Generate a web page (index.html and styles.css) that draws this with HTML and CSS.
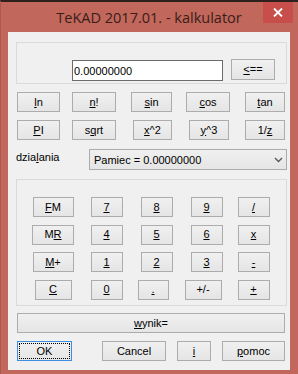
FILE: index.html
```html
<!DOCTYPE html>
<html>
<head>
<meta charset="utf-8">
<link rel="stylesheet" href="styles.css">
</head>
<body>
<div class="win">
  <div class="titlebar">
    <div class="title">TeKAD 2017.01. - kalkulator</div>
    <div class="close">
      <svg width="10" height="9" viewBox="0 0 10 9"><path d="M1 0.5 L9 8.5 M9 0.5 L1 8.5" stroke="#fff" stroke-width="1.8" fill="none"/></svg>
    </div>
  </div>
  <div class="client">
    <div class="group g1">
      <input class="edit" type="text" value="0.00000000">
      <button class="btn back"><span><u>&lt;</u>==</span></button>
    </div>

    <div class="fn">
      <button class="btn w43"><span><u>l</u>n</span></button>
      <button class="btn w44 m12"><span><u>n</u>!</span></button>
      <button class="btn w41 m15"><span><u>s</u>in</span></button>
      <button class="btn w44 m14"><span><u>c</u>os</span></button>
      <button class="btn w40 m15"><span><u>t</u>an</span></button>
    </div>
    <div class="fn">
      <button class="btn w43"><span><u>P</u>I</span></button>
      <button class="btn w44 m12"><span>s<u>q</u>rt</span></button>
      <button class="btn w39 m17"><span><u>x</u>^2</span></button>
      <button class="btn w40 m17"><span><u>y</u>^3</span></button>
      <button class="btn w40 m16"><span>1/<u>z</u></span></button>
    </div>

    <div class="ops">
      <div class="ops-label">dzia<u>l</u>ania</div>
      <div class="combo">
        <span>Pamiec = 0.00000000</span>
        <svg width="9" height="6" viewBox="0 0 9 6"><path d="M1 1 L4.5 4.5 L8 1" stroke="#5a5a5a" stroke-width="1.4" fill="none"/></svg>
      </div>
    </div>

    <div class="group g2">
      <button class="btn w41"><span><u>F</u>M</span></button>
      <button class="btn w32"><span><u>7</u></span></button>
      <button class="btn w32"><span><u>8</u></span></button>
      <button class="btn w32"><span><u>9</u></span></button>
      <button class="btn w32"><span><u>/</u></span></button>

      <button class="btn w42"><span>M<u>R</u></span></button>
      <button class="btn w32"><span><u>4</u></span></button>
      <button class="btn w32"><span><u>5</u></span></button>
      <button class="btn w32"><span><u>6</u></span></button>
      <button class="btn w32"><span><u>x</u></span></button>

      <button class="btn w41"><span><u>M</u>+</span></button>
      <button class="btn w32"><span><u>1</u></span></button>
      <button class="btn w32"><span><u>2</u></span></button>
      <button class="btn w32"><span><u>3</u></span></button>
      <button class="btn w32"><span><u>-</u></span></button>

      <button class="btn w37"><span><u>C</u></span></button>
      <button class="btn w32"><span><u>0</u></span></button>
      <button class="btn w31 shift"><span><u>.</u></span></button>
      <button class="btn w37 shift"><span>+/-</span></button>
      <button class="btn w32"><span><u>+</u></span></button>
    </div>

    <button class="btn wynik"><span><u>w</u>ynik=</span></button>

    <div class="bottom">
      <button class="btn ok"><span>OK</span></button>
      <button class="btn w64 m30"><span>Cancel</span></button>
      <button class="btn w34 m11"><span><u>i</u></span></button>
      <button class="btn w63 m11"><span><u>p</u>omoc</span></button>
    </div>
  </div>
</div>
</body>
</html>
```

FILE: styles.css
```css
* { box-sizing: border-box; }
html, body { margin: 0; padding: 0; }
body {
  font-family: "Liberation Sans", Arial, sans-serif;
  font-size: 11px;
  color: #000;
  background: #c1675b;
}
.win {
  width: 298px;
  height: 374px;
  background: #c1675b;
  border-top: 2px solid #2e201d;
  border-left: 1px solid #ae5a4f;
  padding: 0 8px 4px 7px;
  display: flex;
  flex-direction: column;
  overflow: hidden;
}
.titlebar {
  height: 30px;
  margin: 0 -8px 0 -8px;
  display: grid;
  grid-template-columns: 1fr auto 1fr;
  align-items: start;
}
.title {
  grid-column: 2;
  font-family: "Open Sans", "Noto Sans", sans-serif;
  font-size: 14.5px;
  line-height: 20px;
  padding-top: 6px;
  color: #3a1d19;
  white-space: nowrap;
}
.close {
  grid-column: 3;
  justify-self: end;
  margin-right: 5px;
  width: 30px;
  height: 21px;
  background: #c84e4b;
  display: flex;
  align-items: center;
  justify-content: center;
}
.close svg { display: block; }
.client {
  flex: 1;
  background: #f0f0f0;
  padding-top: 10px;
}
.group {
  margin-left: 8px;
  width: 271px;
  border: 1px solid #dadada;
}
.g1 {
  height: 42px;
  padding: 16px 0 0 55px;
  display: flex;
  align-items: flex-start;
}
.edit {
  width: 151px;
  height: 21px;
  margin: 1px 0 0 0;
  padding: 0 0 0 1px;
  border: 1px solid #6b6b6b;
  background: #fff;
  font: inherit;
  color: #000;
  outline: none;
}
.btn {
  height: 20px;
  margin: 0;
  padding: 0;
  border: 1px solid #acacac;
  background: linear-gradient(#f0f0f0, #e5e5e5);
  font: inherit;
  color: #000;
  display: flex;
  align-items: center;
  justify-content: center;
  line-height: 13px;
}
.btn u, .ops-label u { text-underline-offset: 1px; }
.back { width: 44px; height: 21px; margin-left: 8px; }

.fn {
  display: flex;
  padding-left: 9px;
  margin-top: 8px;
}
.w31 { width: 31px; }
.w32 { width: 32px; }
.w34 { width: 34px; }
.w37 { width: 37px; }
.w39 { width: 39px; }
.w40 { width: 40px; }
.w41 { width: 41px; }
.w42 { width: 42px; }
.w43 { width: 43px; }
.w44 { width: 44px; }
.w63 { width: 63px; }
.w64 { width: 64px; }
.m11 { margin-left: 11px; }
.m12 { margin-left: 12px; }
.m14 { margin-left: 14px; }
.m15 { margin-left: 15px; }
.m16 { margin-left: 16px; }
.m17 { margin-left: 17px; }
.m30 { margin-left: 30px; }

.ops {
  display: flex;
  align-items: flex-start;
  margin-top: 9px;
  padding-left: 8px;
}
.ops-label {
  width: 73px;
  padding-top: 2px;
  line-height: 13px;
}
.combo {
  width: 198px;
  height: 21px;
  border: 1px solid #acacac;
  background: linear-gradient(#f0f0f0, #e5e5e5);
  display: flex;
  align-items: center;
  justify-content: space-between;
  padding: 0 3px 0 4px;
}
.combo svg { display: block; margin-top: 1px; }

.g2 {
  margin-top: 9px;
  height: 127px;
  padding: 17px 0 0 9px;
  display: grid;
  grid-template-columns: 54px 53px 47px 53px 41px;
  grid-auto-rows: 20px;
  row-gap: 7.67px;
  justify-items: center;
}
.shift { margin-right: 7px; }

.wynik {
  width: 268px;
  margin: 7px 0 0 9px;
}
.bottom {
  display: flex;
  padding-left: 9px;
  margin-top: 8px;
}
.ok {
  width: 55px;
  border-color: #3d8ee0;
  outline: 1px dotted #000;
  outline-offset: -3px;
}
```
